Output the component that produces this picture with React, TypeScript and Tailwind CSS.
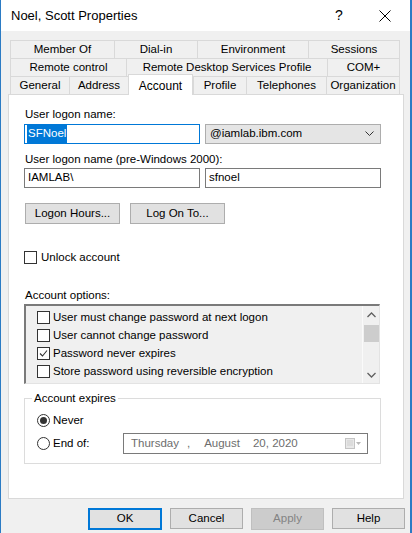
import React from 'react';

const font = { fontFamily: '"Liberation Sans", Arial, sans-serif' };

type Tab = { label: string; w: string; active?: boolean };

const rows: Tab[][] = [
  [
    { label: 'Member Of', w: 'w-[104px]' },
    { label: 'Dial-in', w: 'w-[83px]' },
    { label: 'Environment', w: 'w-[111px]' },
    { label: 'Sessions', w: 'w-[92px]' },
  ],
  [
    { label: 'Remote control', w: 'w-[116px]' },
    { label: 'Remote Desktop Services Profile', w: 'w-[201px]' },
    { label: 'COM+', w: 'w-[73px]' },
  ],
  [
    { label: 'General', w: 'w-[59px]' },
    { label: 'Address', w: 'w-[59px]' },
    { label: 'Account', w: 'w-[65px]', active: true },
    { label: 'Profile', w: 'w-[53px]' },
    { label: 'Telephones', w: 'w-[80px]' },
    { label: 'Organization', w: 'w-[74px]' },
  ],
];

function Checkbox({ checked }: { checked?: boolean }) {
  return (
    <span className="w-[13px] h-[13px] border border-[#333] bg-white flex items-center justify-center shrink-0">
      {checked && (
        <svg width="9" height="9" viewBox="0 0 9 9">
          <path d="M1 4.5 L3.5 7 L8 1.5" fill="none" stroke="#333" strokeWidth="1.1" />
        </svg>
      )}
    </span>
  );
}

function Radio({ checked }: { checked?: boolean }) {
  return (
    <span className="w-[13px] h-[13px] rounded-full border border-[#333] bg-white flex items-center justify-center shrink-0">
      {checked && <span className="w-[7px] h-[7px] rounded-full bg-[#333]" />}
    </span>
  );
}

function Btn({ children, w = 'w-[95px]' }: { children: React.ReactNode; w?: string }) {
  return (
    <div className={`${w} h-[21px] bg-[#e1e1e1] border border-[#adadad] flex items-center justify-center text-[#000]`}>
      {children}
    </div>
  );
}

export default function App() {
  return (
    <div
      className="w-[412px] h-[533px] bg-[#f0f0f0] border-l border-r-2 border-[#2b7bc4] flex flex-col text-[11.5px] text-[#000] overflow-hidden"
      style={font}
    >
      {/* title bar */}
      <div className="h-[31px] bg-white flex items-center shrink-0">
        <span className="pl-[10px] text-[13px] flex-1">Noel, Scott Properties</span>
        <span className="text-[14px] w-[12px] mr-[32px]">?</span>
        <svg width="12" height="12" viewBox="0 0 12 12" className="mr-[19px]">
          <path d="M0.5 0.5 L11.5 11.5 M11.5 0.5 L0.5 11.5" stroke="#000" strokeWidth="1" />
        </svg>
      </div>

      {/* tabs */}
      <div className="pt-[9px] pl-[9px] flex flex-col">
        {rows.map((row, i) => (
          <div key={i} className="flex h-[18px]">
            {row.map((t) => (
              <div
                key={t.label}
                className={
                  t.active
                    ? `${t.w} h-[21px] -mt-[2px] bg-white border-x border-t border-[#d9d9d9] flex items-start justify-center pt-[2px] z-10 text-[12px]`
                    : `${t.w} border-l border-t border-[#d9d9d9] last:border-r flex items-center justify-center`
                }
              >
                {t.label}
              </div>
            ))}
          </div>
        ))}
      </div>

      {/* panel */}
      <div className="ml-[7px] w-[396px] h-[405px] bg-white border border-[#d9d9d9] px-[15px] pt-[11px] flex flex-col shrink-0">
        <div className="h-[16px] pl-[1px]">User logon name:</div>
        <div className="flex gap-[5px] mt-[2px]">
          <div className="w-[176px] h-[20px] border border-[#0078d7] flex items-center px-[2px]">
            <span className="bg-[#0078d7] text-white px-[1px]">SFNoel</span>
          </div>
          <div className="w-[176px] h-[20px] border border-[#adadad] bg-[#e5e5e5] flex items-center pl-[4px] pr-[6px]">
            <span className="flex-1">@iamlab.ibm.com</span>
            <svg width="9" height="6" viewBox="0 0 9 6">
              <path d="M0.5 0.5 L4.5 4.5 L8.5 0.5" fill="none" stroke="#333" strokeWidth="1" />
            </svg>
          </div>
        </div>
        <div className="h-[16px] pl-[1px] mt-[7px]">User logon name (pre-Windows 2000):</div>
        <div className="flex gap-[5px] mt-[1px]">
          <div className="w-[176px] h-[20px] border border-[#7a7a7a] flex items-center px-[3px]">IAMLAB\</div>
          <div className="w-[176px] h-[20px] border border-[#7a7a7a] flex items-center px-[3px]">sfnoel</div>
        </div>
        <div className="flex gap-[10px] mt-[15px] pl-[1px]">
          <Btn>Logon Hours...</Btn>
          <Btn>Log On To...</Btn>
        </div>

        <div className="flex items-center gap-[4px] mt-[25px]">
          <Checkbox />
          <span>Unlock account</span>
        </div>

        <div className="h-[16px] pl-[1px] mt-[21px]">Account options:</div>
        <div className="w-[356px] h-[80px] mt-[1px] bg-[#f0f0f0] border-t-2 border-l-2 border-[#7a7a7a] border-r border-b border-r-[#e3e3e3] border-b-[#e3e3e3] flex">
          <div className="flex-1 flex flex-col pl-[11px] pt-[5px] gap-[5px]">
            {[
              ['User must change password at next logon', false],
              ['User cannot change password', false],
              ['Password never expires', true],
              ['Store password using reversible encryption', false],
            ].map(([label, c]) => (
              <div key={label as string} className="flex items-center gap-[3px] h-[13px]">
                <Checkbox checked={c as boolean} />
                <span className="whitespace-nowrap">{label as string}</span>
              </div>
            ))}
          </div>
          <div className="w-[17px] bg-[#f0f0f0] border-l border-[#fafafa] flex flex-col items-center">
            <svg width="9" height="6" viewBox="0 0 9 6" className="mt-[6px]">
              <path d="M0.5 5 L4.5 1 L8.5 5" fill="none" stroke="#606060" strokeWidth="1.3" />
            </svg>
            <div className="w-[15px] h-[17px] bg-[#cdcdcd] mt-[7px]" />
            <div className="flex-1" />
            <svg width="9" height="6" viewBox="0 0 9 6" className="mb-[5px]">
              <path d="M0.5 1 L4.5 5 L8.5 1" fill="none" stroke="#606060" strokeWidth="1.3" />
            </svg>
          </div>
        </div>

        <div className="relative w-[357px] h-[66px] mt-[14px] border border-[#dcdcdc] flex flex-col pl-[12px] pt-[14px]">
          <span className="absolute -top-[9px] left-[7px] bg-white px-[2px]">Account expires</span>
          <div className="flex items-center gap-[3px] h-[14px]">
            <Radio checked />
            <span>Never</span>
          </div>
          <div className="flex items-center mt-[6px]">
            <div className="flex items-center gap-[3px] w-[86px]">
              <Radio />
              <span>End of:</span>
            </div>
            <div className="w-[245px] h-[21px] border border-[#7a7a7a] flex items-center pl-[7px] pr-[6px] text-[#6d6d6d]">
              <span>Thursday</span>
              <span className="ml-[8px]">,</span>
              <span className="ml-[14px]">August</span>
              <span className="ml-[13px]">20, 2020</span>
              <span className="flex-1" />
              <svg width="16" height="11" viewBox="0 0 16 11">
                <rect x="0.5" y="0.5" width="9" height="10" fill="#e8e8e8" stroke="#c4c4c4" />
                <path d="M2 3 H8 M2 5 H8 M2 7 H8" stroke="#cfcfcf" />
                <path d="M11 4 L13.5 7 L16 4 Z" fill="#b8b8b8" />
              </svg>
            </div>
          </div>
        </div>
      </div>

      {/* bottom buttons */}
      <div className="flex gap-[8px] mt-[9px] ml-[87px]">
        <div className="w-[74px] h-[22px] bg-[#e1e1e1] border-2 border-[#0078d7] flex items-center justify-center">OK</div>
        <Btn w="w-[73px]">Cancel</Btn>
        <div className="w-[73px] h-[22px] bg-[#cccccc] border border-[#bfbfbf] flex items-center justify-center text-[#838383]">
          Apply
        </div>
        <Btn w="w-[73px]">Help</Btn>
      </div>
    </div>
  );
}
